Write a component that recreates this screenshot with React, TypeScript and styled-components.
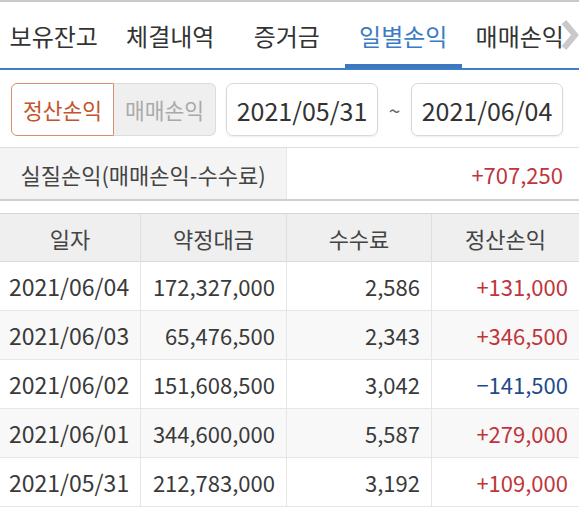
import React from "react";
import styled, { createGlobalStyle } from "styled-components";

const Global = createGlobalStyle`
  html, body { margin: 0; padding: 0; background: #fff; }
  body { font-family: "Noto Sans CJK KR", "Noto Sans", sans-serif; color: #333; }
  * { box-sizing: border-box; }
`;

const Page = styled.div`
  width: 579px;
  border-top: 2px solid #c9c9c9;
  overflow: hidden;
`;

const TabBar = styled.div`
  position: relative;
  height: 68px;
  border-bottom: 2px solid #3f7dc6;
  overflow: hidden;
`;

const TabTrack = styled.div`
  display: flex;
  height: 100%;
  margin-left: -4.5px;
`;

const Tab = styled.div<{ $active?: boolean }>`
  flex: 0 0 116.5px;
  display: flex;
  align-items: center;
  justify-content: center;
  font-size: 24px;
  color: ${(p) => (p.$active ? "#3b7cc4" : "#333")};
  position: relative;
  white-space: nowrap;
  &::after {
    content: "";
    display: ${(p) => (p.$active ? "block" : "none")};
    position: absolute;
    left: 0;
    right: 0;
    bottom: -2px;
    height: 6px;
    background: #3b78c0;
  }
`;

const Chevron = styled.div`
  position: absolute;
  right: 0;
  top: 0;
  bottom: 0;
  width: 20px;
  display: flex;
  align-items: center;
  justify-content: flex-end;
`;

const FilterBar = styled.div`
  display: flex;
  align-items: center;
  padding: 13px 0 11px 11px;
`;

const Segmented = styled.div`
  display: flex;
  height: 53px;
`;

const SegButton = styled.div<{ $active?: boolean }>`
  width: ${(p) => (p.$active ? 103 : 102)}px;
  display: flex;
  align-items: center;
  justify-content: center;
  font-size: 21.5px;
  border: 1px solid ${(p) => (p.$active ? "#d6906f" : "#dcdcdc")};
  border-left-width: ${(p) => (p.$active ? 1 : 0)}px;
  background: ${(p) => (p.$active ? "#fff" : "#efefef")};
  color: ${(p) => (p.$active ? "#c4532c" : "#aaa")};
  border-radius: ${(p) => (p.$active ? "6px 0 0 6px" : "0 6px 6px 0")};
`;

const DateBox = styled.div<{ $first?: boolean }>`
  width: 152px;
  height: 53px;
  display: flex;
  align-items: center;
  justify-content: center;
  font-size: 25px;
  color: #333;
  border: 1px solid #d8d8d8;
  border-radius: 7px;
  box-shadow: 0 1px 2px rgba(0, 0, 0, 0.08);
  margin-left: ${(p) => (p.$first ? "10px" : "0")};
`;

const Tilde = styled.div`
  width: 33px;
  text-align: center;
  font-size: 21px;
  color: #666;
`;

const Summary = styled.div`
  display: grid;
  grid-template-columns: 287px 1fr;
  height: 54px;
  border-top: 1px solid #dedede;
  border-bottom: 2px solid #cfcfcf;
`;

const SummaryLabel = styled.div`
  background: #f4f4f4;
  display: flex;
  align-items: center;
  justify-content: center;
  font-size: 22px;
  color: #444;
  border-right: 1px solid #e6e6e6;
`;

const SummaryValue = styled.div`
  display: flex;
  align-items: center;
  justify-content: flex-end;
  padding-right: 16px;
  font-size: 22px;
  color: #c0353b;
`;

const Table = styled.div`
  margin-top: 12px;
  display: grid;
  grid-template-columns: 141px 146px 145px 147px;
  border-top: 1px solid #d6d6d6;
`;

const HeadCell = styled.div`
  height: 48px;
  background: #efefef;
  display: flex;
  align-items: center;
  justify-content: center;
  font-size: 22px;
  color: #444;
  border-bottom: 1px solid #dadada;
  border-right: 1px solid #dedede;
  &:nth-child(4n) { border-right: none; }
`;

const Cell = styled.div<{ $align?: "left" | "right"; $shade?: boolean; $tone?: "up" | "down" }>`
  height: 49px;
  display: flex;
  align-items: center;
  justify-content: ${(p) => (p.$align === "left" ? "flex-start" : "flex-end")};
  padding: ${(p) => (p.$align === "left" ? "0 0 0 9px" : "0 11px 0 0")};
  font-size: ${(p) => (p.$align === "left" ? "23px" : "22px")};
  background: ${(p) => (p.$shade ? "#f8f8f8" : "#fff")};
  color: ${(p) => (p.$tone === "up" ? "#c0353b" : p.$tone === "down" ? "#1f4b8c" : "#3a3a3a")};
  border-bottom: 1px solid #e6e6e6;
  border-right: 1px solid #e6e6e6;
  &:nth-child(4n) { border-right: none; }
`;

const tabs = ["보유잔고", "체결내역", "증거금", "일별손익", "매매손익"];

const rows = [
  ["2021/06/04", "172,327,000", "2,586", "+131,000"],
  ["2021/06/03", "65,476,500", "2,343", "+346,500"],
  ["2021/06/02", "151,608,500", "3,042", "−141,500"],
  ["2021/06/01", "344,600,000", "5,587", "+279,000"],
  ["2021/05/31", "212,783,000", "3,192", "+109,000"],
];

export default function App() {
  return (
    <Page>
      <Global />
      <TabBar>
        <TabTrack>
          {tabs.map((t) => (
            <Tab key={t} $active={t === "일별손익"}>
              {t}
            </Tab>
          ))}
        </TabTrack>
        <Chevron>
          <svg width="18" height="32" viewBox="0 0 18 32">
            <polyline points="3,3 14,16 3,29" fill="none" stroke="#c9c9c9" strokeWidth="6" />
          </svg>
        </Chevron>
      </TabBar>
      <FilterBar>
        <Segmented>
          <SegButton $active>정산손익</SegButton>
          <SegButton>매매손익</SegButton>
        </Segmented>
        <DateBox $first>2021/05/31</DateBox>
        <Tilde>~</Tilde>
        <DateBox>2021/06/04</DateBox>
      </FilterBar>
      <Summary>
        <SummaryLabel>실질손익(매매손익-수수료)</SummaryLabel>
        <SummaryValue>+707,250</SummaryValue>
      </Summary>
      <Table>
        {["일자", "약정대금", "수수료", "정산손익"].map((h) => (
          <HeadCell key={h}>{h}</HeadCell>
        ))}
        {rows.map((r, i) =>
          r.map((v, j) => (
            <Cell
              key={`${i}-${j}`}
              $align={j === 0 ? "left" : "right"}
              $shade={i % 2 === 1}
              $tone={j === 3 ? (v.startsWith("+") ? "up" : "down") : undefined}
            >
              {v}
            </Cell>
          ))
        )}
      </Table>
    </Page>
  );
}
